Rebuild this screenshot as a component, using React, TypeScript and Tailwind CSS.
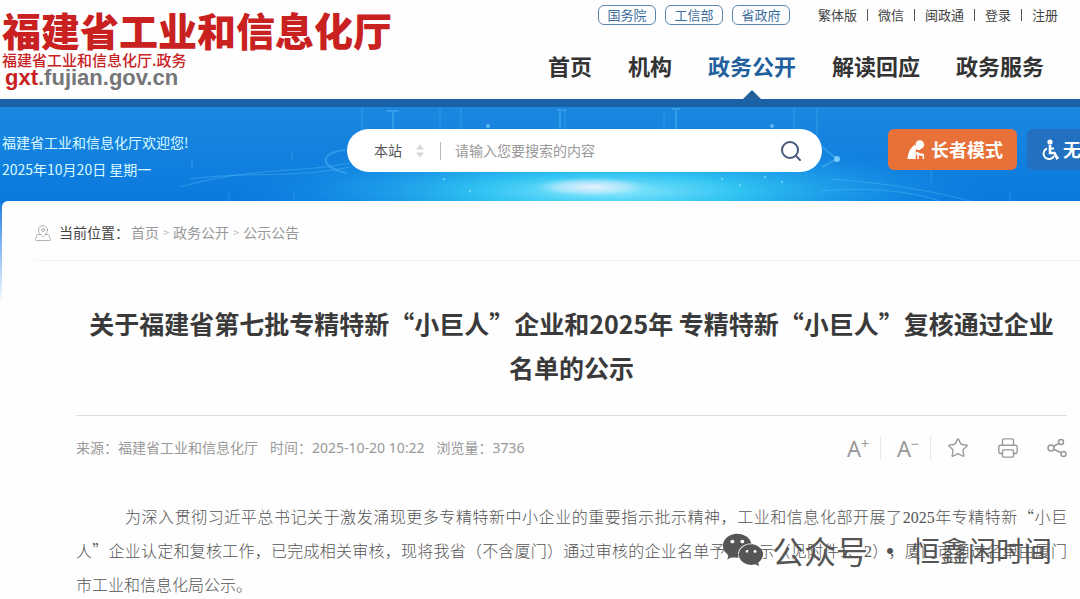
import React from 'react';
import { Search, Star, Printer, MapPinned } from 'lucide-react';
import { FaWeixin } from 'react-icons/fa';

interface NavItem {
  label: string;
  active?: boolean;
}

const departments = ['国务院', '工信部', '省政府'];
const quickLinks = ['繁体版', '微信', '闽政通', '登录', '注册'];
const navItems: NavItem[] = [
  { label: '首页' },
  { label: '机构' },
  { label: '政务公开', active: true },
  { label: '解读回应' },
  { label: '政务服务' },
];
const crumbs = ['首页', '政务公开', '公示公告'];

const Header: React.FC = () => (
  <header className="flex h-[99px] justify-between bg-[#fefefe]">
    <a href="#" className="flex flex-col whitespace-nowrap pl-[2px] pt-[7px] text-[#c8211f]">
      <span className="text-[39px] font-black leading-[44px]">福建省工业和信息化厅</span>
      <span className="text-[15px] font-medium leading-[18px]">福建省工业和信息化厅.政务</span>
      <span className="pl-[3px] font-['Liberation_Sans',sans-serif] text-[22px] font-bold leading-[18px] text-[#747679]">
        <span className="text-[#c8211f]">gxt</span>.fujian.gov.cn
      </span>
    </a>
    <div className="flex shrink-0 flex-col items-end">
      <div className="flex items-center pr-[22px] pt-[5px] text-[13px] leading-5">
        <div className="mr-7 flex gap-[9px]">
          {departments.map((name) => (
            <a
              key={name}
              href="#"
              className="flex h-5 w-[58px] items-center justify-center rounded-md border border-[#5b87ad] text-[#3d6f9e]"
            >
              {name}
            </a>
          ))}
        </div>
        <ul className="flex items-center text-[#444]">
          {quickLinks.map((name, i) => (
            <li key={name} className="flex items-center">
              {i > 0 && <span className="mx-[10px] h-3 w-px bg-[#555]" />}
              <a href="#">{name}</a>
            </li>
          ))}
        </ul>
      </div>
      <nav className="flex flex-1 gap-9 pr-9 text-[22px] font-bold text-[#333]">
        {navItems.map((item) => (
          <a
            key={item.label}
            href="#"
            className={item.active ? 'relative pt-[22px] leading-9 text-[#1f609d]' : 'pt-[22px] leading-9'}
          >
            {item.label}
            {item.active && (
              <svg viewBox="0 0 18 9" className="absolute bottom-0 left-1/2 w-[18px] -translate-x-1/2">
                <path d="M0 9 9 0l9 9z" fill="#1f609d" />
              </svg>
            )}
          </a>
        ))}
      </nav>
    </div>
  </header>
);

const BannerArt: React.FC = () => (
  <svg
    viewBox="0 0 1080 94"
    preserveAspectRatio="none"
    className="absolute inset-0 h-full w-full"
    aria-hidden="true"
  >
    <defs>
      <linearGradient id="sky" x1="0" y1="0" x2="0" y2="1">
        <stop offset="0" stopColor="#1b87df" />
        <stop offset="1" stopColor="#0b7ade" />
      </linearGradient>
      <radialGradient id="glow">
        <stop offset="0" stopColor="#8eebff" />
        <stop offset="0.35" stopColor="#35cff5" stopOpacity="0.85" />
        <stop offset="0.7" stopColor="#22a8ee" stopOpacity="0.45" />
        <stop offset="1" stopColor="#1287e2" stopOpacity="0" />
      </radialGradient>
      <radialGradient id="core">
        <stop offset="0" stopColor="#e9f2ff" />
        <stop offset="0.6" stopColor="#b8e8fb" stopOpacity="0.7" />
        <stop offset="1" stopColor="#6adff8" stopOpacity="0" />
      </radialGradient>
    </defs>
    <rect width="1080" height="94" fill="url(#sky)" />
    <ellipse cx="610" cy="84" rx="380" ry="50" fill="url(#glow)" />
    <ellipse cx="592" cy="80" rx="62" ry="10" fill="url(#core)" />
    <g fill="none" stroke="#62c9f7" strokeOpacity="0.35">
      <path d="M180 80C250 60 300 66 350 56M190 72c60-8 100 0 160-12M830 72c60 4 110 14 140 22M820 84c50-4 90 0 120 10" />
      <path d="M345 43c-26 3-26 17 2 23M822 40l15 12-15 8" strokeWidth="2" />
      <path d="M362 1v26M440 1v26M461 1v26M565 3v24M664 3v24M794 1v34M817 1v40M931 60v16M1010 84v10M192 52v10M292 46v8M229 86v8M294 86v8" />
      <path d="M387 4h12M393 4v22M557 3h9M560 3v24M672 2h8M676 2v24" strokeWidth="2" />
    </g>
    <circle cx="837" cy="52" r="3" fill="#8cdcff" fillOpacity="0.8" />
    <circle cx="772" cy="19" r="2" fill="#8cdcff" fillOpacity="0.6" />
    <circle cx="488" cy="19" r="2" fill="#8cdcff" fillOpacity="0.6" />
    <g fill="#a4efff" fillOpacity="0.7">
      <circle cx="722" cy="72" r="1" />
      <circle cx="740" cy="78" r="1" />
      <circle cx="765" cy="70" r="1" />
      <circle cx="782" cy="75" r="1" />
      <circle cx="444" cy="72" r="1" />
      <circle cx="470" cy="84" r="1" />
    </g>
  </svg>
);

const ElderIcon: React.FC = () => (
  <svg viewBox="0 0 18 20" className="h-5 w-[18px]" fill="currentColor" aria-hidden="true">
    <circle cx="12.8" cy="4.6" r="4.3" />
    <path d="M8 4.500C4 7.500 1 11.500.5 19h9.800v-3.600L8.500 13l2-1.200 2.700 1.600h2c1.200 0 1.900.7 1.900 1.900V19h-1.600v-3.200h-2l-1.700-.6V19h-3V9l2 1c2 .2 3-.4 3-1.200C11 9 8.500 7.500 8 4.500z" />
  </svg>
);

const WheelchairIcon: React.FC = () => (
  <svg viewBox="0 0 18 22" className="h-[22px] w-[18px]" fill="none" stroke="currentColor" aria-hidden="true">
    <circle cx="9" cy="3" r="2.600" fill="currentColor" stroke="none" />
    <path d="M9 6v8h4.500l2.500 5 1.500-1" strokeWidth="2.600" />
    <path d="M9.500 9.500h3.500" strokeWidth="2" />
    <path d="M6 9.500a5.500 5.500 0 1 0 7 7.500" strokeWidth="2" />
  </svg>
);

const Banner: React.FC = () => (
  <section className="relative h-[102px] border-t-8 border-[#1a62a6] bg-[#0b7ade]">
    <BannerArt />
    <div className="relative flex items-start pt-[22px]">
      <div className="w-[347px] shrink-0 pl-[2px] text-[14px] leading-[27px] text-[#d9fbff]">
        <p>福建省工业和信息化厅欢迎您!</p>
        <p>2025年10月20日 星期一</p>
      </div>
      <form className="flex h-[43px] flex-1 items-center rounded-full bg-white pl-[27px] pr-[19px] text-[14px]">
        <select aria-label="搜索范围" className="w-[42px] appearance-none bg-transparent text-[#555] outline-none">
          <option>本站</option>
        </select>
        <svg viewBox="0 0 8 14" className="w-2" fill="#d5d5d5" aria-hidden="true">
          <path d="M0 5.500 4 .5l4 5zM0 8.500l4 5 4-5z" />
        </svg>
        <span className="ml-4 mr-[14px] h-[18px] w-px bg-[#bbb]" />
        <input
          type="text"
          aria-label="搜索"
          placeholder="请输入您要搜索的内容"
          className="min-w-0 flex-1 bg-transparent text-[#555] outline-none placeholder:text-[#999]"
        />
        <button type="button" aria-label="搜索" className="text-[#46587a]">
          <Search size={24} strokeWidth={2} />
        </button>
      </form>
      <button
        type="button"
        className="ml-[66px] flex h-[41px] shrink-0 items-center gap-[6px] rounded-md bg-[#e77138] pl-[19px] pr-[14px] text-[18px] font-bold text-white"
      >
        <ElderIcon />
        长者模式
      </button>
      <button
        type="button"
        className="ml-[10px] flex h-[41px] w-[53px] shrink-0 items-center gap-1 overflow-hidden rounded-l-md bg-[#2270bf] pl-[14px] text-[18px] font-bold text-white"
      >
        <span className="shrink-0">
          <WheelchairIcon />
        </span>
        <span className="shrink-0">无</span>
      </button>
    </div>
  </section>
);

const Breadcrumb: React.FC = () => (
  <nav className="ml-8 flex h-[60px] items-center border-b border-[#f3f3f3] pt-1 text-[14px] text-[#999]">
    <MapPinned size={18} strokeWidth={1} className="mr-[7px] text-[#999]" />
    <span className="mr-[2px] text-[#444]">当前位置：</span>
    {crumbs.map((name, i) => (
      <React.Fragment key={name}>
        {i > 0 && <span className="mx-1 text-[11px] text-[#bbb]">&gt;</span>}
        <a href="#">{name}</a>
      </React.Fragment>
    ))}
  </nav>
);

const Tools: React.FC = () => (
  <div className="flex items-center text-[#999]">
    <button
      type="button"
      className="mr-4 flex w-[34px] items-start border-r border-[#e8e8e8] font-['Noto_Sans',sans-serif] text-[22px] leading-6"
    >
      A<span className="text-[14px] leading-4">+</span>
    </button>
    <button
      type="button"
      className="mr-4 flex w-[34px] items-start border-r border-[#e8e8e8] font-['Noto_Sans',sans-serif] text-[22px] leading-6"
    >
      A<span className="text-[14px] leading-4">−</span>
    </button>
    <button type="button" aria-label="收藏" className="w-[50px]">
      <Star size={22} strokeWidth={1.5} />
    </button>
    <button type="button" aria-label="打印" className="w-[50px]">
      <Printer size={22} strokeWidth={1.5} />
    </button>
    <button type="button" aria-label="分享">
      <svg viewBox="0 0 20 20" className="w-5" fill="none" stroke="currentColor" strokeWidth="1.500">
        <circle cx="4" cy="10" r="3" />
        <circle cx="14" cy="4" r="2.500" />
        <circle cx="16.500" cy="16" r="2.500" />
        <path d="m6.500 8.500 5.300-3.200M6.700 11.300l7.500 3.500" />
      </svg>
    </button>
  </div>
);

const Article: React.FC = () => (
  <article className="pl-[74px] pr-[13px] [text-spacing-trim:space-all]">
    <h1 className="border-b border-[#dedede] px-2 pb-[26px] pt-[40px] text-center text-[25px] font-bold leading-11 text-[#3a3a3a]">
      关于福建省第七批专精特新“小巨人”企业和2025年 专精特新“小巨人”复核通过企业名单的公示
    </h1>
    <div className="flex h-[63px] items-center justify-between">
      <div className="flex gap-3 font-['Noto_Sans','Noto_Sans_CJK_SC',sans-serif] text-[14px] text-[#999]">
        <span>来源：福建省工业和信息化厅</span>
        <span>时间：2025-10-20 10:22</span>
        <span>浏览量：3736</span>
      </div>
      <Tools />
    </div>
    <p className="pt-5 text-justify indent-[49px] text-[16px] font-light leading-[34px] text-[#555]">
      为深入贯彻习近平总书记关于激发涌现更多专精特新中小企业的重要指示批示精神，工业和信息化部开展了
      <span className="font-['Liberation_Serif',serif] leading-none">2025</span>
      年专精特新“小巨人”企业认定和复核工作，已完成相关审核，现将我省（不含厦门）通过审核的企业名单予以公示（见附件
      <span className="font-['Liberation_Serif',serif] leading-none">1</span>、
      <span className="font-['Liberation_Serif',serif] leading-none">2</span>
      ），厦门市通过名单由厦门市工业和信息化局公示。
    </p>
  </article>
);

const App: React.FC = () => {
  return (
    <div
      lang="zh-CN"
      className="relative h-screen overflow-hidden bg-[#fefefe] font-['Noto_Sans_CJK_SC',sans-serif]"
    >
      <Header />
      <Banner />
      <div className="bg-linear-to-b from-[#0b7ade] to-white to-25% pl-[2px]">
        <main className="rounded-tl-md bg-[#fefefe] pb-4">
          <Breadcrumb />
          <Article />
        </main>
      </div>
      <div className="absolute bottom-[27px] right-7 flex items-center whitespace-nowrap text-[28px] leading-11 text-[#555]">
        <FaWeixin size={42} className="mr-2" />
        <span className="text-[32px]">公众号</span>
        <span className="w-11 text-center">·</span>
        <span>恒鑫闲时间</span>
      </div>
    </div>
  );
};

export default App;
